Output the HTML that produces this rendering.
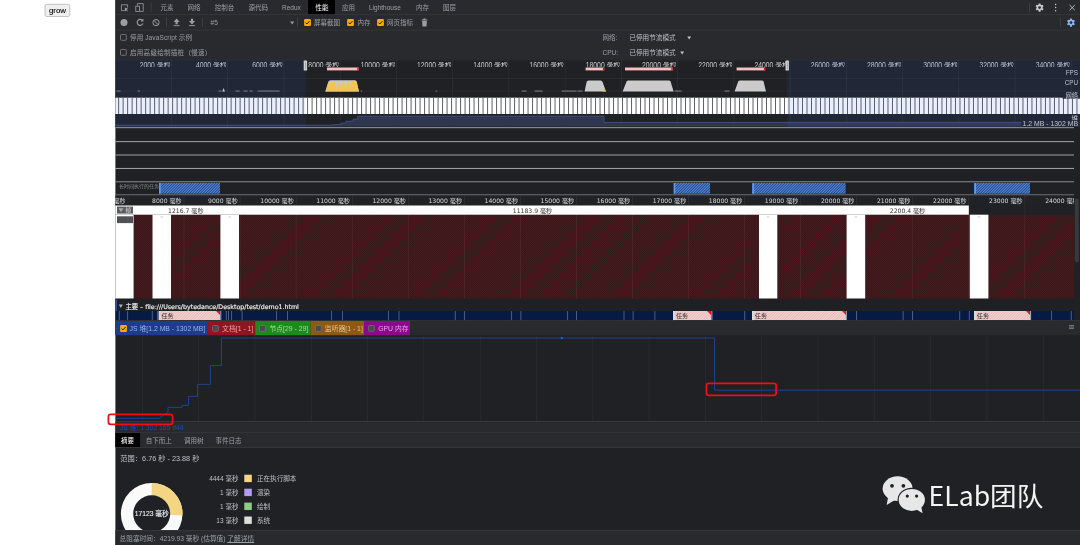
<!DOCTYPE html>
<html lang="zh"><head><meta charset="utf-8"><title>Performance</title>
<style>
html,body{margin:0;padding:0}
body{width:1080px;height:545px;position:relative;overflow:hidden;background:#fff;font-family:'Liberation Sans','Noto Sans CJK SC',sans-serif}
#r div,#r svg{position:absolute}
#r{position:absolute;left:0;top:0;width:1080px;height:545px;overflow:hidden;will-change:transform}
.t{white-space:nowrap}
</style></head><body><div id="r">
<svg style="left:0;top:0;width:0;height:0" width="0" height="0"><defs>
<pattern id="hb" width="1.9" height="1.9" patternUnits="userSpaceOnUse" patternTransform="rotate(-45)"><rect width="1.9" height="1.9" fill="#4f86e4"/><rect width="1.9" height="0.95" fill="#2c4a84"/></pattern>
<pattern id="hp" width="1.9" height="1.9" patternUnits="userSpaceOnUse" patternTransform="rotate(-45)"><rect width="1.9" height="1.9" fill="#f4d2d2"/><rect width="1.9" height="0.8" fill="#e6b6b6"/></pattern>
<pattern id="hr" width="1.5" height="1.5" patternUnits="userSpaceOnUse" patternTransform="rotate(-45)"><rect width="1.5" height="1.5" fill="#2f1a1d"/><rect width="1.5" height="0.5" fill="#62151a"/></pattern>
</defs></svg>

<svg style="left:40px;top:0;width:36px;height:22px" viewBox="40 0 36 22"><rect x="45" y="4.3" width="24.8" height="12.2" rx="1.8" fill="#efefef" stroke="#a8a8a8" stroke-width="0.65"/></svg>
<div class="t " style="top:6.38px;font-size:7.9px;line-height:9px;color:#000;left:-92.50px;width:300px;text-align:center;-webkit-text-stroke:0.1px #000;">grow</div>
<svg style="left:115px;top:0px;width:965px;height:545px" viewBox="115 0 965 545"><rect x="115.40" y="0.00" width="964.60" height="545.00" fill="#202124"/><rect x="115.40" y="0.00" width="964.60" height="59.60" fill="#292a2d"/><rect x="115.40" y="14.20" width="964.60" height="0.70" fill="#3a3b3f"/><rect x="115.40" y="29.75" width="964.60" height="0.70" fill="#3a3b3f"/><rect x="308.00" y="0.00" width="27.00" height="14.10" fill="#000"/></svg>
<div class="t " style="top:3.87px;font-size:6.5px;line-height:7px;color:#9aa0a6;left:160.60px;">元素</div>
<div class="t " style="top:3.87px;font-size:6.5px;line-height:7px;color:#9aa0a6;left:187.60px;">网络</div>
<div class="t " style="top:3.87px;font-size:6.5px;line-height:7px;color:#9aa0a6;left:214.80px;">控制台</div>
<div class="t " style="top:3.87px;font-size:6.5px;line-height:7px;color:#9aa0a6;left:248.60px;">源代码</div>
<div class="t " style="top:3.87px;font-size:6.5px;line-height:7px;color:#9aa0a6;left:282.00px;">Redux</div>
<div class="t " style="top:3.87px;font-size:6.5px;line-height:7px;color:#fff;left:315.40px;">性能</div>
<div class="t " style="top:3.87px;font-size:6.5px;line-height:7px;color:#9aa0a6;left:342.00px;">应用</div>
<div class="t " style="top:3.87px;font-size:6.5px;line-height:7px;color:#9aa0a6;left:369.00px;">Lighthouse</div>
<div class="t " style="top:3.87px;font-size:6.5px;line-height:7px;color:#9aa0a6;left:416.00px;">内存</div>
<div class="t " style="top:3.87px;font-size:6.5px;line-height:7px;color:#9aa0a6;left:443.00px;">图层</div>
<svg style="left:120px;top:3px;width:26px;height:10px" viewBox="0 0 26 10"><path d="M6.2 7.6H1.4V1.8H7.6V4.6" fill="none" stroke="#9aa0a6" stroke-width="0.8"/><path d="M4.6 4.4L8.2 5.8L6.8 6.4L7.9 8.1L7.2 8.5L6.2 6.9L5.2 7.8Z" fill="#9aa0a6"/><path d="M17.4 2.6V0.6H23.2V8.4H19.6" fill="none" stroke="#9aa0a6" stroke-width="0.8"/><rect x="15.8" y="3.2" width="3.6" height="5.2" fill="none" stroke="#9aa0a6" stroke-width="0.8"/></svg>
<svg style="left:150px;top:3px;width:880px;height:9px" viewBox="150 3 880 9"><rect x="150.80" y="3.00" width="0.60" height="9.00" fill="#4a4c50"/><rect x="1029.20" y="3.00" width="0.60" height="9.00" fill="#4a4c50"/></svg>
<svg style="left:1030px;top:0;width:50px;height:30px" viewBox="0 0 50 30"><g transform="translate(9.6,7.6)"><g fill="#c8c9cb"><rect x="-1" y="-4.1" width="2" height="8.2" rx="0.3" transform="rotate(0)"/><rect x="-1" y="-4.1" width="2" height="8.2" rx="0.3" transform="rotate(60)"/><rect x="-1" y="-4.1" width="2" height="8.2" rx="0.3" transform="rotate(120)"/><circle r="3"/></g><circle r="1.35" fill="#292a2d"/></g><g fill="#c8c9cb"><circle cx="25.6" cy="4.5" r="0.75"/><circle cx="25.6" cy="7.6" r="0.75"/><circle cx="25.6" cy="10.7" r="0.75"/></g><path d="M39.6 5L44.8 10.2M44.8 5L39.6 10.2" stroke="#c8c9cb" stroke-width="0.9" fill="none"/><g transform="translate(41,22.6)"><g fill="#8ab4f8"><rect x="-1" y="-4.1" width="2" height="8.2" rx="0.3" transform="rotate(0)"/><rect x="-1" y="-4.1" width="2" height="8.2" rx="0.3" transform="rotate(60)"/><rect x="-1" y="-4.1" width="2" height="8.2" rx="0.3" transform="rotate(120)"/><circle r="3"/></g><circle r="1.35" fill="#292a2d"/></g></svg>
<svg style="left:1060px;top:17px;width:1px;height:10px" viewBox="1060 17 1 10"><rect x="1060.40" y="17.50" width="0.60" height="9.50" fill="#4a4c50"/></svg>
<svg style="left:118px;top:16px;width:80px;height:13px" viewBox="0 0 80 13"><circle cx="6" cy="6.6" r="3.5" fill="#9c9ea1"/><path d="M24.6 4.6A3 3 0 1 0 25 7.4" fill="none" stroke="#9c9ea1" stroke-width="1.1"/><path d="M25.4 2.6V5.4H22.6Z" fill="#9c9ea1"/><circle cx="38" cy="6.6" r="3.1" fill="none" stroke="#9c9ea1" stroke-width="1"/><path d="M35.8 4.4L40.2 8.8" stroke="#9c9ea1" stroke-width="1"/><path d="M58.6 2.6L61.6 6H59.7V8.2H57.5V6H55.6Z" fill="#9c9ea1"/><rect x="55.6" y="9.2" width="6" height="0.9" fill="#9c9ea1"/><path d="M74 8.4L77 5H75.1V2.8H72.9V5H71Z" fill="#9c9ea1"/><rect x="71" y="9.2" width="6" height="0.9" fill="#9c9ea1"/></svg>
<svg style="left:166px;top:17px;width:132px;height:10px" viewBox="166 17 132 10"><rect x="166.40" y="17.50" width="0.60" height="9.50" fill="#4a4c50"/><rect x="202.40" y="17.50" width="0.60" height="9.50" fill="#4a4c50"/><rect x="297.40" y="17.50" width="0.60" height="9.50" fill="#4a4c50"/></svg>
<div class="t " style="top:18.97px;font-size:6.5px;line-height:7px;color:#9aa0a6;left:210.60px;">#5</div>
<svg style="left:289.6px;top:20.8px;width:4.4px;height:4px" viewBox="0 0 4.4 4"><path d="M0.2 0.4H4.2L2.2 3.6Z" fill="#9aa0a6"/></svg>
<svg style="left:303.6px;top:19.1px;width:7px;height:7px" viewBox="0 0 7 7"><rect x="0.1" y="0.1" width="6.8" height="6.8" rx="1" fill="#f9ab00"/><path d="M1.5 3.6L2.9 5L5.6 2" fill="none" stroke="#202124" stroke-width="1"/></svg>
<div class="t " style="top:18.97px;font-size:6.5px;line-height:7px;color:#9aa0a6;left:314.00px;">屏幕截图</div>
<svg style="left:347px;top:19.1px;width:7px;height:7px" viewBox="0 0 7 7"><rect x="0.1" y="0.1" width="6.8" height="6.8" rx="1" fill="#f9ab00"/><path d="M1.5 3.6L2.9 5L5.6 2" fill="none" stroke="#202124" stroke-width="1"/></svg>
<div class="t " style="top:18.97px;font-size:6.5px;line-height:7px;color:#9aa0a6;left:357.60px;">内存</div>
<svg style="left:377px;top:19.1px;width:7px;height:7px" viewBox="0 0 7 7"><rect x="0.1" y="0.1" width="6.8" height="6.8" rx="1" fill="#f9ab00"/><path d="M1.5 3.6L2.9 5L5.6 2" fill="none" stroke="#202124" stroke-width="1"/></svg>
<div class="t " style="top:18.97px;font-size:6.5px;line-height:7px;color:#9aa0a6;left:387.00px;">网页指标</div>
<svg style="left:421px;top:18px;width:7px;height:9px" viewBox="0 0 7 9"><path d="M0.6 1.6H6.4V2.5H0.6ZM2.4 0.6H4.6V1.6H2.4ZM1.1 3H5.9L5.5 8.4H1.5Z" fill="#9c9ea1"/></svg>
<svg style="left:120px;top:34.2px;width:7px;height:7px" viewBox="0 0 7 7"><rect x="0.5" y="0.5" width="5.8" height="5.8" rx="0.9" fill="none" stroke="#8a8d91" stroke-width="0.7"/></svg>
<div class="t " style="top:33.97px;font-size:6.5px;line-height:7px;color:#9aa0a6;left:130.00px;letter-spacing:0.13px;">停用 JavaScript 示例</div>
<svg style="left:120px;top:49.4px;width:7px;height:7px" viewBox="0 0 7 7"><rect x="0.5" y="0.5" width="5.8" height="5.8" rx="0.9" fill="none" stroke="#8a8d91" stroke-width="0.7"/></svg>
<div class="t " style="top:48.97px;font-size:6.5px;line-height:7px;color:#9aa0a6;left:130.00px;letter-spacing:0.3px;">启用高级绘制插桩（慢速）</div>
<div class="t " style="top:33.97px;font-size:6.5px;line-height:7px;color:#9aa0a6;left:602.60px;">网络:</div>
<div class="t " style="top:34.02px;font-size:6.62px;line-height:7px;color:#bdc1c6;left:629.40px;">已停用节流模式</div>
<div class="t " style="top:48.87px;font-size:6.5px;line-height:7px;color:#9aa0a6;left:602.60px;">CPU:</div>
<div class="t " style="top:48.92px;font-size:6.62px;line-height:7px;color:#bdc1c6;left:629.40px;">已停用节流模式</div>
<svg style="left:686.8px;top:35.8px;width:4.4px;height:4px" viewBox="0 0 4.4 4"><path d="M0.2 0.4H4.2L2.2 3.6Z" fill="#bdc1c6"/></svg>
<svg style="left:679.8px;top:50.7px;width:4.4px;height:4px" viewBox="0 0 4.4 4"><path d="M0.2 0.4H4.2L2.2 3.6Z" fill="#bdc1c6"/></svg>
<svg style="left:115px;top:59px;width:965px;height:69px" viewBox="115 59 965 69"><rect x="115.40" y="59.60" width="964.60" height="67.60" fill="#202124"/><rect x="115.40" y="59.60" width="964.60" height="0.60" fill="#33353a"/><rect x="171.14" y="59.60" width="0.60" height="67.60" fill="rgba(255,255,255,0.08)"/><rect x="227.38" y="59.60" width="0.60" height="67.60" fill="rgba(255,255,255,0.08)"/><rect x="283.62" y="59.60" width="0.60" height="67.60" fill="rgba(255,255,255,0.08)"/><rect x="339.86" y="59.60" width="0.60" height="67.60" fill="rgba(255,255,255,0.08)"/><rect x="396.10" y="59.60" width="0.60" height="67.60" fill="rgba(255,255,255,0.08)"/><rect x="452.34" y="59.60" width="0.60" height="67.60" fill="rgba(255,255,255,0.08)"/><rect x="508.58" y="59.60" width="0.60" height="67.60" fill="rgba(255,255,255,0.08)"/><rect x="564.82" y="59.60" width="0.60" height="67.60" fill="rgba(255,255,255,0.08)"/><rect x="621.06" y="59.60" width="0.60" height="67.60" fill="rgba(255,255,255,0.08)"/><rect x="677.30" y="59.60" width="0.60" height="67.60" fill="rgba(255,255,255,0.08)"/><rect x="733.54" y="59.60" width="0.60" height="67.60" fill="rgba(255,255,255,0.08)"/><rect x="789.78" y="59.60" width="0.60" height="67.60" fill="rgba(255,255,255,0.08)"/><rect x="846.02" y="59.60" width="0.60" height="67.60" fill="rgba(255,255,255,0.08)"/><rect x="902.26" y="59.60" width="0.60" height="67.60" fill="rgba(255,255,255,0.08)"/><rect x="958.50" y="59.60" width="0.60" height="67.60" fill="rgba(255,255,255,0.08)"/><rect x="1014.74" y="59.60" width="0.60" height="67.60" fill="rgba(255,255,255,0.08)"/><rect x="1070.98" y="59.60" width="0.60" height="67.60" fill="rgba(255,255,255,0.08)"/><rect x="115.40" y="78.10" width="964.60" height="0.60" fill="rgba(255,255,255,0.08)"/><rect x="115.40" y="90.80" width="964.60" height="0.50" fill="rgba(255,255,255,0.08)"/></svg>
<div style="left:0;top:62.3px;width:1080px;height:4.6px;overflow:hidden">
<div class="t" style="right:909.76px;top:-1.2px;font-size:6.8px;line-height:8px;color:#c6c8cc;transform:scaleY(1.32);transform-origin:0 1.4px">2000 毫秒</div>
<div class="t" style="right:853.52px;top:-1.2px;font-size:6.8px;line-height:8px;color:#c6c8cc;transform:scaleY(1.32);transform-origin:0 1.4px">4000 毫秒</div>
<div class="t" style="right:797.28px;top:-1.2px;font-size:6.8px;line-height:8px;color:#c6c8cc;transform:scaleY(1.32);transform-origin:0 1.4px">6000 毫秒</div>
<div class="t" style="right:741.04px;top:-1.2px;font-size:6.8px;line-height:8px;color:#c6c8cc;transform:scaleY(1.32);transform-origin:0 1.4px">8000 毫秒</div>
<div class="t" style="right:684.80px;top:-1.2px;font-size:6.8px;line-height:8px;color:#c6c8cc;transform:scaleY(1.32);transform-origin:0 1.4px">10000 毫秒</div>
<div class="t" style="right:628.56px;top:-1.2px;font-size:6.8px;line-height:8px;color:#c6c8cc;transform:scaleY(1.32);transform-origin:0 1.4px">12000 毫秒</div>
<div class="t" style="right:572.32px;top:-1.2px;font-size:6.8px;line-height:8px;color:#c6c8cc;transform:scaleY(1.32);transform-origin:0 1.4px">14000 毫秒</div>
<div class="t" style="right:516.08px;top:-1.2px;font-size:6.8px;line-height:8px;color:#c6c8cc;transform:scaleY(1.32);transform-origin:0 1.4px">16000 毫秒</div>
<div class="t" style="right:459.84px;top:-1.2px;font-size:6.8px;line-height:8px;color:#c6c8cc;transform:scaleY(1.32);transform-origin:0 1.4px">18000 毫秒</div>
<div class="t" style="right:403.60px;top:-1.2px;font-size:6.8px;line-height:8px;color:#c6c8cc;transform:scaleY(1.32);transform-origin:0 1.4px">20000 毫秒</div>
<div class="t" style="right:347.36px;top:-1.2px;font-size:6.8px;line-height:8px;color:#c6c8cc;transform:scaleY(1.32);transform-origin:0 1.4px">22000 毫秒</div>
<div class="t" style="right:291.12px;top:-1.2px;font-size:6.8px;line-height:8px;color:#c6c8cc;transform:scaleY(1.32);transform-origin:0 1.4px">24000 毫秒</div>
<div class="t" style="right:234.88px;top:-1.2px;font-size:6.8px;line-height:8px;color:#c6c8cc;transform:scaleY(1.32);transform-origin:0 1.4px">26000 毫秒</div>
<div class="t" style="right:178.64px;top:-1.2px;font-size:6.8px;line-height:8px;color:#c6c8cc;transform:scaleY(1.32);transform-origin:0 1.4px">28000 毫秒</div>
<div class="t" style="right:122.40px;top:-1.2px;font-size:6.8px;line-height:8px;color:#c6c8cc;transform:scaleY(1.32);transform-origin:0 1.4px">30000 毫秒</div>
<div class="t" style="right:66.16px;top:-1.2px;font-size:6.8px;line-height:8px;color:#c6c8cc;transform:scaleY(1.32);transform-origin:0 1.4px">32000 毫秒</div>
<div class="t" style="right:9.92px;top:-1.2px;font-size:6.8px;line-height:8px;color:#c6c8cc;transform:scaleY(1.32);transform-origin:0 1.4px">34000 毫秒</div>
</div>
<svg style="left:115.4px;top:110px;width:964.6px;height:18px" viewBox="0 0 964.6 18"><polygon points="0.0,15.2 214.6,15.2 226.6,14.2 226.6,13.0 231.1,13.0 231.1,11.2 238.1,11.2 238.1,9.2 242.8,9.2 242.8,6.2 489.0,6.2 489.0,12.4 964.6,12.4 964.6,16.6 0,16.6" fill="#2f3750"/><polyline points="0.0,15.2 214.6,15.2 226.6,14.2 226.6,13.0 231.1,13.0 231.1,11.2 238.1,11.2 238.1,9.2 242.8,9.2 242.8,6.2 489.0,6.2 489.0,12.4 964.6,12.4" fill="none" stroke="#445789" stroke-width="0.8"/></svg>
<svg style="left:115px;top:97px;width:965px;height:17px" viewBox="115 97 965 17"><rect x="115.40" y="97.70" width="964.60" height="16.30" fill="#fff"/></svg>
<svg style="left:115.4px;top:97.7px;width:964.6px;height:16.3px" viewBox="0 0 964.6 16.3"><path d="M3.55 0v16.3M8.05 0v16.3M12.55 0v16.3M17.05 0v16.3M21.55 0v16.3M26.05 0v16.3M30.55 0v16.3M35.05 0v16.3M39.55 0v16.3M44.05 0v16.3M48.55 0v16.3M53.05 0v16.3M57.55 0v16.3M62.05 0v16.3M66.55 0v16.3M71.05 0v16.3M75.55 0v16.3M80.05 0v16.3M84.55 0v16.3M89.05 0v16.3M93.55 0v16.3M98.05 0v16.3M102.55 0v16.3M107.05 0v16.3M111.55 0v16.3M116.05 0v16.3M120.55 0v16.3M125.05 0v16.3M129.55 0v16.3M134.05 0v16.3M138.55 0v16.3M143.05 0v16.3M147.55 0v16.3M152.05 0v16.3M156.55 0v16.3M161.05 0v16.3M165.55 0v16.3M170.05 0v16.3M174.55 0v16.3M179.05 0v16.3M183.55 0v16.3M188.05 0v16.3M192.55 0v16.3M197.05 0v16.3M201.55 0v16.3M206.05 0v16.3M210.55 0v16.3M215.05 0v16.3M219.55 0v16.3M224.05 0v16.3M228.55 0v16.3M233.05 0v16.3M237.55 0v16.3M242.05 0v16.3M246.55 0v16.3M251.05 0v16.3M255.55 0v16.3M260.05 0v16.3M264.55 0v16.3M269.05 0v16.3M273.55 0v16.3M278.05 0v16.3M282.55 0v16.3M287.05 0v16.3M291.55 0v16.3M296.05 0v16.3M300.55 0v16.3M305.05 0v16.3M309.55 0v16.3M314.05 0v16.3M318.55 0v16.3M323.05 0v16.3M327.55 0v16.3M332.05 0v16.3M336.55 0v16.3M341.05 0v16.3M345.55 0v16.3M350.05 0v16.3M354.55 0v16.3M359.05 0v16.3M363.55 0v16.3M368.05 0v16.3M372.55 0v16.3M377.05 0v16.3M381.55 0v16.3M386.05 0v16.3M390.55 0v16.3M395.05 0v16.3M399.55 0v16.3M404.05 0v16.3M408.55 0v16.3M413.05 0v16.3M417.55 0v16.3M422.05 0v16.3M426.55 0v16.3M431.05 0v16.3M435.55 0v16.3M440.05 0v16.3M444.55 0v16.3M449.05 0v16.3M453.55 0v16.3M458.05 0v16.3M462.55 0v16.3M467.05 0v16.3M471.55 0v16.3M476.05 0v16.3M480.55 0v16.3M485.05 0v16.3M489.55 0v16.3M494.05 0v16.3M498.55 0v16.3M503.05 0v16.3M507.55 0v16.3M512.05 0v16.3M516.55 0v16.3M521.05 0v16.3M525.55 0v16.3M530.05 0v16.3M534.55 0v16.3M539.05 0v16.3M543.55 0v16.3M548.05 0v16.3M552.55 0v16.3M557.05 0v16.3M561.55 0v16.3M566.05 0v16.3M570.55 0v16.3M575.05 0v16.3M579.55 0v16.3M584.05 0v16.3M588.55 0v16.3M593.05 0v16.3M597.55 0v16.3M602.05 0v16.3M606.55 0v16.3M611.05 0v16.3M615.55 0v16.3M620.05 0v16.3M624.55 0v16.3M629.05 0v16.3M633.55 0v16.3M638.05 0v16.3M642.55 0v16.3M647.05 0v16.3M651.55 0v16.3M656.05 0v16.3M660.55 0v16.3M665.05 0v16.3M669.55 0v16.3M674.05 0v16.3M678.55 0v16.3M683.05 0v16.3M687.55 0v16.3M692.05 0v16.3M696.55 0v16.3M701.05 0v16.3M705.55 0v16.3M710.05 0v16.3M714.55 0v16.3M719.05 0v16.3M723.55 0v16.3M728.05 0v16.3M732.55 0v16.3M737.05 0v16.3M741.55 0v16.3M746.05 0v16.3M750.55 0v16.3M755.05 0v16.3M759.55 0v16.3M764.05 0v16.3M768.55 0v16.3M773.05 0v16.3M777.55 0v16.3M782.05 0v16.3M786.55 0v16.3M791.05 0v16.3M795.55 0v16.3M800.05 0v16.3M804.55 0v16.3M809.05 0v16.3M813.55 0v16.3M818.05 0v16.3M822.55 0v16.3M827.05 0v16.3M831.55 0v16.3M836.05 0v16.3M840.55 0v16.3M845.05 0v16.3M849.55 0v16.3M854.05 0v16.3M858.55 0v16.3M863.05 0v16.3M867.55 0v16.3M872.05 0v16.3M876.55 0v16.3M881.05 0v16.3M885.55 0v16.3M890.05 0v16.3M894.55 0v16.3M899.05 0v16.3M903.55 0v16.3M908.05 0v16.3M912.55 0v16.3M917.05 0v16.3M921.55 0v16.3M926.05 0v16.3M930.55 0v16.3M935.05 0v16.3M939.55 0v16.3M944.05 0v16.3M948.55 0v16.3M953.05 0v16.3M957.55 0v16.3M962.05 0v16.3" stroke="#55565a" stroke-width="0.95" fill="none"/></svg>
<svg style="left:115.4px;top:59.6px;width:964.6px;height:34px" viewBox="0 0 964.6 34"><rect x="212.0" y="7.5" width="31.6" height="2.9" fill="#f6bfc0"/><rect x="242.3" y="7.5" width="1.3" height="2.9" fill="#e8121c"/><rect x="470.6" y="7.5" width="18.6" height="2.9" fill="#f6bfc0"/><rect x="487.9" y="7.5" width="1.3" height="2.9" fill="#e8121c"/><rect x="510.0" y="7.5" width="47.6" height="2.9" fill="#f6bfc0"/><rect x="556.3" y="7.5" width="1.3" height="2.9" fill="#e8121c"/><rect x="621.6" y="7.5" width="28.6" height="2.9" fill="#f6bfc0"/><rect x="648.9" y="7.5" width="1.3" height="2.9" fill="#e8121c"/><path d="M210.4 31.4L213.2 22.0Q213.8 20.3 215.6 20.3L239.8 20.3Q241.4 20.3 241.8 21.8L243.9 31.4Z" fill="#c9c9c9"/><path d="M210.4 31.4L213.0 23.8Q214.2 21.7 216.6 21.7L219.0 21.9Q220.8 22.4 221.3 28.0L221.9 28.0Q222.4 22.4 223.8 22.4Q225.2 22.6 225.8 28.0L226.4 28.0Q227.0 21.4 228.2 21.4Q229.6 21.6 230.3 28.7L230.9 28.7Q231.5 20.9 232.9 20.9Q234.2 21.1 234.6 26.4L235.2 26.4Q235.6 20.7 237.2 20.7L239.6 20.7Q241.4 20.8 241.8 22.4L243.9 31.4Z" fill="#f1c453"/><path d="M469.6 31.4L471.6 22Q472.0 20.4 473.6 20.4H485.6Q487.0 20.4 487.6 22L491.0 31.4Z" fill="#cbcbcb"/><path d="M487.6 31.4L489.2 28.4L491.0 31.4Z" fill="#f1c453"/><path d="M507.6 31.4L511.6 21.6Q512.2 20.4 513.6 20.4H553.6Q555.2 20.4 555.6 21.6L558.6 31.4Z" fill="#cbcbcb"/><path d="M619.6 31.4L623.2 21.6Q623.6 20.4 625.2 20.4H646.6Q648.2 20.4 648.6 21.6L651.0 31.4Z" fill="#cbcbcb"/><rect x="1.6" y="30.6" width="4.0" height="0.9" fill="#8d8e90"/><rect x="22.6" y="30.6" width="2.4" height="0.9" fill="#8d8e90"/><rect x="103.6" y="30.6" width="3.0" height="0.9" fill="#8d8e90"/><rect x="120.6" y="30.6" width="4.0" height="0.9" fill="#8d8e90"/><rect x="128.6" y="30.6" width="4.0" height="0.9" fill="#8d8e90"/><rect x="134.6" y="30.6" width="3.0" height="0.9" fill="#8d8e90"/><rect x="142.6" y="30.6" width="22.0" height="0.9" fill="#8d8e90"/><rect x="245.6" y="30.6" width="1.5" height="0.9" fill="#8d8e90"/><rect x="320.6" y="30.6" width="1.5" height="0.9" fill="#8d8e90"/><rect x="406.6" y="30.6" width="5.0" height="0.9" fill="#8d8e90"/><rect x="419.6" y="30.6" width="8.0" height="0.9" fill="#8d8e90"/><rect x="446.6" y="30.6" width="15.0" height="0.9" fill="#8d8e90"/><rect x="462.6" y="30.6" width="5.0" height="0.9" fill="#8d8e90"/><rect x="559.6" y="30.6" width="7.0" height="0.9" fill="#8d8e90"/><rect x="609.6" y="30.6" width="5.0" height="0.9" fill="#8d8e90"/><path d="M107.2 31.4L108.6 28L110.0 31.4Z" fill="#cfcfcf"/></svg>
<svg style="left:115px;top:59px;width:965px;height:69px" viewBox="115 59 965 69"><rect x="115.40" y="59.60" width="190.20" height="67.60" fill="rgba(60,100,230,0.10)"/><rect x="787.20" y="59.60" width="292.80" height="67.60" fill="rgba(60,100,230,0.10)"/><rect x="303.70" y="60.60" width="3.40" height="10.00" rx="0.6" fill="#d0d0d0"/><rect x="305.10" y="62.20" width="0.60" height="6.80" fill="#8c8c8c"/><rect x="785.50" y="60.60" width="3.40" height="10.00" rx="0.6" fill="#d0d0d0"/><rect x="786.90" y="62.20" width="0.60" height="6.80" fill="#8c8c8c"/></svg>
<div class="t " style="top:68.80px;font-size:6.3px;line-height:7px;color:#bdc1c6;right:2.00px;">FPS</div>
<div class="t " style="top:78.80px;font-size:6.3px;line-height:7px;color:#bdc1c6;right:2.00px;">CPU</div>
<svg style="left:1062px;top:92px;width:18px;height:7px" viewBox="1062 92 18 7"><rect x="1062.50" y="92.40" width="17.50" height="6.40" fill="rgba(37,42,58,0.85)"/></svg>
<div class="t " style="top:91.80px;font-size:6.3px;line-height:7px;color:#bdc1c6;right:2.00px;">网络</div>
<div class="t " style="top:115.21px;font-size:6.6px;line-height:7px;color:#d0d3d8;right:2.00px;">堆</div>
<svg style="left:1021px;top:120px;width:59px;height:7px" viewBox="1021 120 59 7"><rect x="1021.00" y="120.20" width="59.00" height="6.60" fill="rgba(37,42,58,0.85)"/></svg>
<div class="t " style="top:119.92px;font-size:6.9px;line-height:7px;color:#bdc1c6;right:2.00px;">1.2 MB - 1302 MB</div>
<svg style="left:115px;top:127px;width:959px;height:69px" viewBox="115 127 959 69"><rect x="115.40" y="127.00" width="958.60" height="1.20" fill="#858585"/><rect x="115.40" y="141.25" width="958.60" height="0.85" fill="#bcbcbc"/><rect x="115.40" y="154.40" width="958.60" height="1.20" fill="#8a8a8a"/><rect x="115.40" y="167.95" width="958.60" height="0.85" fill="#bcbcbc"/><rect x="115.40" y="181.20" width="958.60" height="1.10" fill="#828282"/><rect x="115.40" y="194.40" width="958.60" height="1.00" fill="#808080"/></svg>
<div class="t " style="top:183.02px;font-size:5px;line-height:6px;color:#8a8d91;left:119.00px;">长时间执行的任务</div>
<svg style="left:159.00px;top:183.00px;width:61.40px;height:10.70px"><rect width="100%" height="100%" fill="url(#hb)"/></svg>
<svg style="left:159px;top:183px;width:2px;height:11px" viewBox="159 183 2 11"><rect x="159.00" y="183.00" width="1.70" height="10.70" fill="#5c9cf8"/></svg>
<svg style="left:673.60px;top:183.00px;width:36.40px;height:10.70px"><rect width="100%" height="100%" fill="url(#hb)"/></svg>
<svg style="left:673px;top:183px;width:3px;height:11px" viewBox="673 183 3 11"><rect x="673.60" y="183.00" width="1.70" height="10.70" fill="#5c9cf8"/></svg>
<svg style="left:752.40px;top:183.00px;width:93.60px;height:10.70px"><rect width="100%" height="100%" fill="url(#hb)"/></svg>
<svg style="left:752px;top:183px;width:3px;height:11px" viewBox="752 183 3 11"><rect x="752.40" y="183.00" width="1.70" height="10.70" fill="#5c9cf8"/></svg>
<svg style="left:974.30px;top:183.00px;width:56.00px;height:10.70px"><rect width="100%" height="100%" fill="url(#hb)"/></svg>
<svg style="left:115px;top:183px;width:959px;height:23px" viewBox="115 183 959 23"><rect x="974.30" y="183.00" width="1.70" height="10.70" fill="#5c9cf8"/><rect x="115.40" y="195.50" width="958.60" height="10.00" fill="#212226"/></svg>
<div style="left:115.4px;top:195.5px;width:958.6px;height:10px;overflow:hidden">
<div class="t" style="right:948.36px;top:0.3px;font-size:6.1px;line-height:9px;color:#dcdcdc;font-family:'DejaVu Sans','Noto Sans CJK SC',sans-serif">7000 毫秒</div>
<div class="t" style="right:892.30px;top:0.3px;font-size:6.1px;line-height:9px;color:#dcdcdc;font-family:'DejaVu Sans','Noto Sans CJK SC',sans-serif">8000 毫秒</div>
<div class="t" style="right:836.24px;top:0.3px;font-size:6.1px;line-height:9px;color:#dcdcdc;font-family:'DejaVu Sans','Noto Sans CJK SC',sans-serif">9000 毫秒</div>
<div class="t" style="right:780.18px;top:0.3px;font-size:6.1px;line-height:9px;color:#dcdcdc;font-family:'DejaVu Sans','Noto Sans CJK SC',sans-serif">10000 毫秒</div>
<div class="t" style="right:724.12px;top:0.3px;font-size:6.1px;line-height:9px;color:#dcdcdc;font-family:'DejaVu Sans','Noto Sans CJK SC',sans-serif">11000 毫秒</div>
<div class="t" style="right:668.06px;top:0.3px;font-size:6.1px;line-height:9px;color:#dcdcdc;font-family:'DejaVu Sans','Noto Sans CJK SC',sans-serif">12000 毫秒</div>
<div class="t" style="right:612.00px;top:0.3px;font-size:6.1px;line-height:9px;color:#dcdcdc;font-family:'DejaVu Sans','Noto Sans CJK SC',sans-serif">13000 毫秒</div>
<div class="t" style="right:555.94px;top:0.3px;font-size:6.1px;line-height:9px;color:#dcdcdc;font-family:'DejaVu Sans','Noto Sans CJK SC',sans-serif">14000 毫秒</div>
<div class="t" style="right:499.88px;top:0.3px;font-size:6.1px;line-height:9px;color:#dcdcdc;font-family:'DejaVu Sans','Noto Sans CJK SC',sans-serif">15000 毫秒</div>
<div class="t" style="right:443.82px;top:0.3px;font-size:6.1px;line-height:9px;color:#dcdcdc;font-family:'DejaVu Sans','Noto Sans CJK SC',sans-serif">16000 毫秒</div>
<div class="t" style="right:387.76px;top:0.3px;font-size:6.1px;line-height:9px;color:#dcdcdc;font-family:'DejaVu Sans','Noto Sans CJK SC',sans-serif">17000 毫秒</div>
<div class="t" style="right:331.70px;top:0.3px;font-size:6.1px;line-height:9px;color:#dcdcdc;font-family:'DejaVu Sans','Noto Sans CJK SC',sans-serif">18000 毫秒</div>
<div class="t" style="right:275.64px;top:0.3px;font-size:6.1px;line-height:9px;color:#dcdcdc;font-family:'DejaVu Sans','Noto Sans CJK SC',sans-serif">19000 毫秒</div>
<div class="t" style="right:219.58px;top:0.3px;font-size:6.1px;line-height:9px;color:#dcdcdc;font-family:'DejaVu Sans','Noto Sans CJK SC',sans-serif">20000 毫秒</div>
<div class="t" style="right:163.52px;top:0.3px;font-size:6.1px;line-height:9px;color:#dcdcdc;font-family:'DejaVu Sans','Noto Sans CJK SC',sans-serif">21000 毫秒</div>
<div class="t" style="right:107.46px;top:0.3px;font-size:6.1px;line-height:9px;color:#dcdcdc;font-family:'DejaVu Sans','Noto Sans CJK SC',sans-serif">22000 毫秒</div>
<div class="t" style="right:51.40px;top:0.3px;font-size:6.1px;line-height:9px;color:#dcdcdc;font-family:'DejaVu Sans','Noto Sans CJK SC',sans-serif">23000 毫秒</div>
<div class="t" style="right:-4.66px;top:0.3px;font-size:6.1px;line-height:9px;color:#dcdcdc;font-family:'DejaVu Sans','Noto Sans CJK SC',sans-serif">24000 毫秒</div>
</div>
<svg style="left:115px;top:205px;width:854px;height:10px" viewBox="115 205 854 10"><rect x="115.40" y="205.50" width="853.40" height="9.20" fill="#fff"/><rect x="117.00" y="206.60" width="16.00" height="7.00" fill="#5a5b5e"/></svg>
<svg style="left:117px;top:206px;width:9px;height:8px" viewBox="117 206 9 8"><path d="M118.3 208.300H123.700L121 212Z" fill="#a9a9ab"/></svg>
<div class="t " style="top:207.27px;font-size:5.6px;line-height:6px;color:#e8e8e8;font-family:'DejaVu Sans','Noto Sans CJK SC',sans-serif;left:125.60px;">帧</div>
<div class="t " style="top:206.76px;font-size:6.1px;line-height:7px;color:#333;font-family:'DejaVu Sans','Noto Sans CJK SC',sans-serif;left:35.80px;width:300px;text-align:center;">1216.7 毫秒</div>
<div class="t " style="top:206.76px;font-size:6.1px;line-height:7px;color:#333;font-family:'DejaVu Sans','Noto Sans CJK SC',sans-serif;left:382.50px;width:300px;text-align:center;">11183.9 毫秒</div>
<div class="t " style="top:206.76px;font-size:6.1px;line-height:7px;color:#333;font-family:'DejaVu Sans','Noto Sans CJK SC',sans-serif;left:757.50px;width:300px;text-align:center;">2200.4 毫秒</div>
<svg style="left:133.00px;top:214.70px;width:941.00px;height:84.30px"><rect width="100%" height="100%" fill="url(#hr)"/></svg>
<svg style="left:115px;top:195px;width:967px;height:126px" viewBox="115 195 967 126"><rect x="115.40" y="214.70" width="18.20" height="84.00" fill="#fff"/><rect x="152.50" y="214.70" width="18.50" height="84.00" fill="#fff"/><rect x="160.45" y="216.60" width="2.60" height="0.70" fill="#b5b5b5"/><rect x="220.40" y="214.70" width="18.60" height="84.00" fill="#fff"/><rect x="228.40" y="216.60" width="2.60" height="0.70" fill="#b5b5b5"/><rect x="759.00" y="214.70" width="18.30" height="84.00" fill="#fff"/><rect x="766.85" y="216.60" width="2.60" height="0.70" fill="#b5b5b5"/><rect x="846.60" y="214.70" width="18.60" height="84.00" fill="#fff"/><rect x="854.60" y="216.60" width="2.60" height="0.70" fill="#b5b5b5"/><rect x="969.80" y="214.70" width="18.60" height="84.00" fill="#fff"/><rect x="977.80" y="216.60" width="2.60" height="0.70" fill="#b5b5b5"/><rect x="117.00" y="216.30" width="16.00" height="6.80" fill="#505154"/><rect x="127.64" y="195.50" width="0.60" height="125.00" fill="rgba(255,255,255,0.09)"/><rect x="183.70" y="195.50" width="0.60" height="125.00" fill="rgba(255,255,255,0.09)"/><rect x="239.76" y="195.50" width="0.60" height="125.00" fill="rgba(255,255,255,0.09)"/><rect x="295.82" y="195.50" width="0.60" height="125.00" fill="rgba(255,255,255,0.09)"/><rect x="351.88" y="195.50" width="0.60" height="125.00" fill="rgba(255,255,255,0.09)"/><rect x="407.94" y="195.50" width="0.60" height="125.00" fill="rgba(255,255,255,0.09)"/><rect x="464.00" y="195.50" width="0.60" height="125.00" fill="rgba(255,255,255,0.09)"/><rect x="520.06" y="195.50" width="0.60" height="125.00" fill="rgba(255,255,255,0.09)"/><rect x="576.12" y="195.50" width="0.60" height="125.00" fill="rgba(255,255,255,0.09)"/><rect x="632.18" y="195.50" width="0.60" height="125.00" fill="rgba(255,255,255,0.09)"/><rect x="688.24" y="195.50" width="0.60" height="125.00" fill="rgba(255,255,255,0.09)"/><rect x="744.30" y="195.50" width="0.60" height="125.00" fill="rgba(255,255,255,0.09)"/><rect x="800.36" y="195.50" width="0.60" height="125.00" fill="rgba(255,255,255,0.09)"/><rect x="856.42" y="195.50" width="0.60" height="125.00" fill="rgba(255,255,255,0.09)"/><rect x="912.48" y="195.50" width="0.60" height="125.00" fill="rgba(255,255,255,0.09)"/><rect x="968.54" y="195.50" width="0.60" height="125.00" fill="rgba(255,255,255,0.09)"/><rect x="1024.60" y="195.50" width="0.60" height="125.00" fill="rgba(255,255,255,0.09)"/><rect x="1080.66" y="195.50" width="0.60" height="125.00" fill="rgba(255,255,255,0.09)"/><rect x="115.40" y="298.70" width="958.60" height="12.40" fill="#1f2023"/><rect x="115.40" y="299.80" width="1.50" height="11.20" fill="#2c54b0"/></svg>
<svg style="left:118px;top:303px;width:6px;height:6px" viewBox="118 303 6 6"><path d="M118.800 304.500H122.800L120.800 308Z" fill="#b4b4b6"/></svg>
<div class="t " style="top:302.63px;font-size:6.3px;line-height:7px;color:#ececec;font-family:'DejaVu Sans','Noto Sans CJK SC',sans-serif;left:125.40px;-webkit-text-stroke:0.18px #ececec;">主要 – file:///Users/bytedance/Desktop/test/demo1.html</div>
<svg style="left:115px;top:311px;width:959px;height:10px" viewBox="115 311 959 10"><rect x="115.40" y="311.00" width="958.60" height="9.30" fill="#061a44"/><rect x="118.85" y="311.00" width="0.70" height="9.30" fill="rgba(190,200,225,0.55)"/><rect x="127.35" y="311.00" width="0.70" height="9.30" fill="rgba(190,200,225,0.55)"/><rect x="151.85" y="311.00" width="0.70" height="9.30" fill="rgba(190,200,225,0.55)"/><rect x="157.05" y="311.00" width="0.70" height="9.30" fill="rgba(190,200,225,0.55)"/><rect x="225.85" y="311.00" width="0.70" height="9.30" fill="rgba(190,200,225,0.55)"/><rect x="228.35" y="311.00" width="0.70" height="9.30" fill="rgba(190,200,225,0.55)"/><rect x="231.35" y="311.00" width="0.70" height="9.30" fill="rgba(190,200,225,0.55)"/><rect x="241.75" y="311.00" width="0.70" height="9.30" fill="rgba(190,200,225,0.55)"/><rect x="276.35" y="311.00" width="0.70" height="9.30" fill="rgba(190,200,225,0.55)"/><rect x="287.05" y="311.00" width="0.70" height="9.30" fill="rgba(190,200,225,0.55)"/><rect x="331.35" y="311.00" width="0.70" height="9.30" fill="rgba(190,200,225,0.55)"/><rect x="342.05" y="311.00" width="0.70" height="9.30" fill="rgba(190,200,225,0.55)"/><rect x="387.95" y="311.00" width="0.70" height="9.30" fill="rgba(190,200,225,0.55)"/><rect x="398.65" y="311.00" width="0.70" height="9.30" fill="rgba(190,200,225,0.55)"/><rect x="454.85" y="311.00" width="0.70" height="9.30" fill="rgba(190,200,225,0.55)"/><rect x="463.95" y="311.00" width="0.70" height="9.30" fill="rgba(190,200,225,0.55)"/><rect x="511.35" y="311.00" width="0.70" height="9.30" fill="rgba(190,200,225,0.55)"/><rect x="520.55" y="311.00" width="0.70" height="9.30" fill="rgba(190,200,225,0.55)"/><rect x="567.35" y="311.00" width="0.70" height="9.30" fill="rgba(190,200,225,0.55)"/><rect x="576.25" y="311.00" width="0.70" height="9.30" fill="rgba(190,200,225,0.55)"/><rect x="623.65" y="311.00" width="0.70" height="9.30" fill="rgba(190,200,225,0.55)"/><rect x="632.75" y="311.00" width="0.70" height="9.30" fill="rgba(190,200,225,0.55)"/><rect x="654.55" y="311.00" width="0.70" height="9.30" fill="rgba(190,200,225,0.55)"/><rect x="744.45" y="311.00" width="0.70" height="9.30" fill="rgba(190,200,225,0.55)"/><rect x="856.15" y="311.00" width="0.70" height="9.30" fill="rgba(190,200,225,0.55)"/><rect x="902.75" y="311.00" width="0.70" height="9.30" fill="rgba(190,200,225,0.55)"/><rect x="912.15" y="311.00" width="0.70" height="9.30" fill="rgba(190,200,225,0.55)"/><rect x="959.45" y="311.00" width="0.70" height="9.30" fill="rgba(190,200,225,0.55)"/><rect x="968.85" y="311.00" width="0.70" height="9.30" fill="rgba(190,200,225,0.55)"/><rect x="1051.35" y="311.00" width="0.70" height="9.30" fill="rgba(190,200,225,0.55)"/><rect x="1070.85" y="311.00" width="0.70" height="9.30" fill="rgba(190,200,225,0.55)"/></svg>
<svg style="left:158.60px;top:311.00px;width:61.80px;height:9.30px"><rect width="100%" height="100%" fill="url(#hp)"/></svg>
<svg style="left:158px;top:311px;width:64px;height:10px" viewBox="158 311 64 10"><rect x="158.60" y="311.00" width="1.60" height="9.30" fill="#dcdcdc"/><rect x="220.20" y="311.00" width="1.10" height="9.30" fill="#9aa3b8"/></svg>
<svg style="left:216.0px;top:311px;width:4.4px;height:4.4px" viewBox="0 0 4.4 4.4"><path d="M0 0H4.4V4.4Z" fill="#f01018"/></svg>
<div class="t " style="top:311.76px;font-size:6.1px;line-height:7px;color:#303030;font-family:'DejaVu Sans','Noto Sans CJK SC',sans-serif;left:161.40px;">任务</div>
<svg style="left:673.20px;top:311.00px;width:38.30px;height:9.30px"><rect width="100%" height="100%" fill="url(#hp)"/></svg>
<svg style="left:673px;top:311px;width:40px;height:10px" viewBox="673 311 40 10"><rect x="673.20" y="311.00" width="1.60" height="9.30" fill="#dcdcdc"/><rect x="711.30" y="311.00" width="1.10" height="9.30" fill="#9aa3b8"/></svg>
<svg style="left:707.1px;top:311px;width:4.4px;height:4.4px" viewBox="0 0 4.4 4.4"><path d="M0 0H4.4V4.4Z" fill="#f01018"/></svg>
<div class="t " style="top:311.76px;font-size:6.1px;line-height:7px;color:#303030;font-family:'DejaVu Sans','Noto Sans CJK SC',sans-serif;left:676.00px;">任务</div>
<svg style="left:752.00px;top:311.00px;width:94.00px;height:9.30px"><rect width="100%" height="100%" fill="url(#hp)"/></svg>
<svg style="left:752px;top:311px;width:95px;height:10px" viewBox="752 311 95 10"><rect x="752.00" y="311.00" width="1.60" height="9.30" fill="#dcdcdc"/><rect x="845.80" y="311.00" width="1.10" height="9.30" fill="#9aa3b8"/></svg>
<svg style="left:841.6px;top:311px;width:4.4px;height:4.4px" viewBox="0 0 4.4 4.4"><path d="M0 0H4.4V4.4Z" fill="#f01018"/></svg>
<div class="t " style="top:311.76px;font-size:6.1px;line-height:7px;color:#303030;font-family:'DejaVu Sans','Noto Sans CJK SC',sans-serif;left:754.80px;">任务</div>
<svg style="left:974.00px;top:311.00px;width:56.20px;height:9.30px"><rect width="100%" height="100%" fill="url(#hp)"/></svg>
<svg style="left:974px;top:311px;width:58px;height:10px" viewBox="974 311 58 10"><rect x="974.00" y="311.00" width="1.60" height="9.30" fill="#dcdcdc"/><rect x="1030.00" y="311.00" width="1.10" height="9.30" fill="#9aa3b8"/></svg>
<svg style="left:1025.8px;top:311px;width:4.4px;height:4.4px" viewBox="0 0 4.4 4.4"><path d="M0 0H4.4V4.4Z" fill="#f01018"/></svg>
<div class="t " style="top:311.76px;font-size:6.1px;line-height:7px;color:#303030;font-family:'DejaVu Sans','Noto Sans CJK SC',sans-serif;left:976.80px;">任务</div>
<svg style="left:115px;top:195px;width:965px;height:141px" viewBox="115 195 965 141"><rect x="1074.00" y="195.50" width="6.00" height="126.00" fill="#202124"/><rect x="1074.80" y="198.20" width="4.00" height="64.20" rx="2" fill="#38393c"/><rect x="115.40" y="320.40" width="964.60" height="14.80" fill="#292a2d"/><rect x="115.40" y="320.40" width="964.60" height="0.60" fill="#3a3b3f"/></svg>
<svg style="left:1069.2px;top:325.2px;width:5.2px;height:4.2px" viewBox="0 0 5 4"><path d="M0 0.3H5M0 1.9H5M0 3.5H5" stroke="#9aa0a6" stroke-width="0.7"/></svg>
<svg style="left:115px;top:321px;width:93px;height:15px" viewBox="115 321 93 15"><rect x="115.40" y="321.00" width="92.50" height="14.20" fill="#1d3c8c"/></svg>
<svg style="left:119.60000000000001px;top:324.6px;width:7px;height:7px" viewBox="0 0 7 7"><rect x="0.1" y="0.1" width="6.8" height="6.8" rx="1" fill="#f9ab00"/><path d="M1.5 3.6L2.9 5L5.6 2" fill="none" stroke="#202124" stroke-width="1"/></svg>
<div class="t " style="top:324.60px;font-size:6.85px;line-height:7px;color:#9db3e8;left:129.60px;">JS 堆[1.2 MB - 1302 MB]</div>
<svg style="left:207px;top:321px;width:49px;height:15px" viewBox="207 321 49 15"><rect x="207.90" y="321.00" width="47.30" height="14.20" fill="#8f1522"/></svg>
<svg style="left:212.1px;top:324.6px;width:7px;height:7px" viewBox="0 0 7 7"><rect x="0.5" y="0.5" width="5.8" height="5.8" rx="0.9" fill="#4a4a4c" stroke="#777" stroke-width="0.7"/></svg>
<div class="t " style="top:324.60px;font-size:6.85px;line-height:7px;color:#f0a0a8;left:222.10px;">文档[1 - 1]</div>
<svg style="left:255px;top:321px;width:56px;height:15px" viewBox="255 321 56 15"><rect x="255.20" y="321.00" width="55.40" height="14.20" fill="#1d8a1d"/></svg>
<svg style="left:259.4px;top:324.6px;width:7px;height:7px" viewBox="0 0 7 7"><rect x="0.5" y="0.5" width="5.8" height="5.8" rx="0.9" fill="#4a4a4c" stroke="#777" stroke-width="0.7"/></svg>
<div class="t " style="top:324.60px;font-size:6.85px;line-height:7px;color:#9fe09f;left:269.40px;">节点[29 - 29]</div>
<svg style="left:310px;top:321px;width:54px;height:15px" viewBox="310 321 54 15"><rect x="310.60" y="321.00" width="53.40" height="14.20" fill="#8c5a14"/></svg>
<svg style="left:314.8px;top:324.6px;width:7px;height:7px" viewBox="0 0 7 7"><rect x="0.5" y="0.5" width="5.8" height="5.8" rx="0.9" fill="#4a4a4c" stroke="#777" stroke-width="0.7"/></svg>
<div class="t " style="top:324.60px;font-size:6.85px;line-height:7px;color:#e9c48a;left:324.80px;">监听器[1 - 1]</div>
<svg style="left:364px;top:321px;width:46px;height:15px" viewBox="364 321 46 15"><rect x="364.00" y="321.00" width="46.00" height="14.20" fill="#8b0a8b"/></svg>
<svg style="left:368.2px;top:324.6px;width:7px;height:7px" viewBox="0 0 7 7"><rect x="0.5" y="0.5" width="5.8" height="5.8" rx="0.9" fill="#4a4a4c" stroke="#777" stroke-width="0.7"/></svg>
<div class="t " style="top:324.60px;font-size:6.85px;line-height:7px;color:#f0a0f0;left:378.20px;">GPU 内存</div>
<svg style="left:115px;top:335px;width:965px;height:88px" viewBox="115 335 965 88"><rect x="142.00" y="335.20" width="0.60" height="86.20" fill="rgba(255,255,255,0.065)"/><rect x="198.31" y="335.20" width="0.60" height="86.20" fill="rgba(255,255,255,0.065)"/><rect x="254.62" y="335.20" width="0.60" height="86.20" fill="rgba(255,255,255,0.065)"/><rect x="310.93" y="335.20" width="0.60" height="86.20" fill="rgba(255,255,255,0.065)"/><rect x="367.24" y="335.20" width="0.60" height="86.20" fill="rgba(255,255,255,0.065)"/><rect x="423.55" y="335.20" width="0.60" height="86.20" fill="rgba(255,255,255,0.065)"/><rect x="479.86" y="335.20" width="0.60" height="86.20" fill="rgba(255,255,255,0.065)"/><rect x="536.17" y="335.20" width="0.60" height="86.20" fill="rgba(255,255,255,0.065)"/><rect x="592.48" y="335.20" width="0.60" height="86.20" fill="rgba(255,255,255,0.065)"/><rect x="648.79" y="335.20" width="0.60" height="86.20" fill="rgba(255,255,255,0.065)"/><rect x="705.10" y="335.20" width="0.60" height="86.20" fill="rgba(255,255,255,0.065)"/><rect x="761.41" y="335.20" width="0.60" height="86.20" fill="rgba(255,255,255,0.065)"/><rect x="817.72" y="335.20" width="0.60" height="86.20" fill="rgba(255,255,255,0.065)"/><rect x="874.03" y="335.20" width="0.60" height="86.20" fill="rgba(255,255,255,0.065)"/><rect x="930.34" y="335.20" width="0.60" height="86.20" fill="rgba(255,255,255,0.065)"/><rect x="986.65" y="335.20" width="0.60" height="86.20" fill="rgba(255,255,255,0.065)"/><rect x="1042.96" y="335.20" width="0.60" height="86.20" fill="rgba(255,255,255,0.065)"/><rect x="115.40" y="421.40" width="964.60" height="0.70" fill="#48494d"/></svg>
<svg style="left:0;top:0;width:1080px;height:545px" viewBox="0 0 1080 545"><polyline points="115.4,418.4 159.4,418.4 168.0,412.0 168.0,407.4 182.0,407.4 182.0,405.4 188.6,405.4 188.6,396.4 197.6,396.4 197.6,384.4 210.4,384.4 210.4,365.6 221.4,365.6 221.4,338.0 714.6,338.0 714.6,390.2 1080.0,390.2" fill="none" stroke="#2049b0" stroke-width="0.8"/><circle cx="561.9" cy="338" r="1.3" fill="#1f5ae6"/></svg>
<svg style="left:115px;top:422px;width:965px;height:11px" viewBox="115 422 965 11"><rect x="115.40" y="422.10" width="964.60" height="10.60" fill="#292a2d"/></svg>
<div style="left:115.4px;top:425px;width:300px;height:7px;overflow:hidden"><div class="t" style="left:4.6px;top:-1.3px;font-size:6.75px;line-height:8px;color:#1b49c6">JS 堆: 1 302 165 944</div></div>
<svg style="left:100px;top:380px;width:700px;height:50px" viewBox="100 380 700 50"><rect x="108.4" y="414.450" width="64.2" height="9.900" rx="2.300" fill="none" stroke="#f80a12" stroke-width="1.750"/><rect x="706.500" y="383.400" width="69.600" height="12" rx="2.300" fill="none" stroke="#f80a12" stroke-width="1.750"/></svg>
<svg style="left:115px;top:432px;width:965px;height:16px" viewBox="115 432 965 16"><rect x="115.40" y="432.40" width="964.60" height="14.60" fill="#292a2d"/><rect x="115.40" y="432.40" width="964.60" height="0.60" fill="#3a3b3f"/><rect x="115.40" y="447.00" width="964.60" height="0.70" fill="#3d3e42"/><rect x="115.40" y="433.00" width="24.60" height="14.00" fill="#000"/></svg>
<div class="t " style="top:436.77px;font-size:6.5px;line-height:7px;color:#fff;left:121.00px;">摘要</div>
<div class="t " style="top:436.77px;font-size:6.5px;line-height:7px;color:#9aa0a6;left:145.80px;">自下而上</div>
<div class="t " style="top:436.77px;font-size:6.5px;line-height:7px;color:#9aa0a6;left:184.00px;">调用树</div>
<div class="t " style="top:436.77px;font-size:6.5px;line-height:7px;color:#9aa0a6;left:215.60px;">事件日志</div>
<div class="t " style="top:454.05px;font-size:7.27px;line-height:9px;color:#bdc1c6;left:120.30px;">范围：6.76 秒 - 23.88 秒</div>
<div class="t " style="top:474.77px;font-size:6.5px;line-height:7px;color:#bdc1c6;right:841.60px;">4444 毫秒</div>
<svg style="left:244px;top:474px;width:8px;height:9px" viewBox="244 474 8 9"><rect x="244.30" y="474.70" width="7.50" height="7.40" fill="#f3d583"/></svg>
<div class="t " style="top:474.81px;font-size:6.6px;line-height:7px;color:#bdc1c6;left:256.90px;">正在执行脚本</div>
<div class="t " style="top:488.77px;font-size:6.5px;line-height:7px;color:#bdc1c6;right:841.60px;">1 毫秒</div>
<svg style="left:244px;top:488px;width:8px;height:9px" viewBox="244 488 8 9"><rect x="244.30" y="488.70" width="7.50" height="7.40" fill="#b49cf0"/></svg>
<div class="t " style="top:488.81px;font-size:6.6px;line-height:7px;color:#bdc1c6;left:256.90px;">渲染</div>
<div class="t " style="top:502.67px;font-size:6.5px;line-height:7px;color:#bdc1c6;right:841.60px;">1 毫秒</div>
<svg style="left:244px;top:502px;width:8px;height:8px" viewBox="244 502 8 8"><rect x="244.30" y="502.60" width="7.50" height="7.40" fill="#8fca86"/></svg>
<div class="t " style="top:502.71px;font-size:6.6px;line-height:7px;color:#bdc1c6;left:256.90px;">绘制</div>
<div class="t " style="top:516.57px;font-size:6.5px;line-height:7px;color:#bdc1c6;right:841.60px;">13 毫秒</div>
<svg style="left:244px;top:516px;width:8px;height:8px" viewBox="244 516 8 8"><rect x="244.30" y="516.50" width="7.50" height="7.40" fill="#dedede"/></svg>
<div class="t " style="top:516.61px;font-size:6.6px;line-height:7px;color:#bdc1c6;left:256.90px;">系统</div>
<svg style="left:0;top:447.7px;width:300px;height:82.5px" viewBox="0 447.7 300 82.5"><circle cx="151.7" cy="513.45" r="30.8" fill="#fafafa"/><path d="M151.7 513.45L151.7 482.65000000000003A30.8 30.8 0 0 1 182.44 515.29Z" fill="#f3d583"/><circle cx="151.7" cy="513.45" r="18.5" fill="#202124"/></svg>
<div class="t " style="top:509.96px;font-size:6.75px;line-height:7px;color:#e8eaed;left:1.80px;width:300px;text-align:center;-webkit-text-stroke:0.12px #e8eaed;">17123 毫秒</div>
<svg style="left:115px;top:530px;width:965px;height:15px" viewBox="115 530 965 15"><rect x="115.40" y="530.20" width="964.60" height="14.80" fill="#292a2d"/><rect x="115.40" y="530.20" width="964.60" height="0.70" fill="#3d3e42"/></svg>
<div class="t " style="top:534.75px;font-size:6.7px;line-height:7px;color:#9aa0a6;left:119.60px;">总阻塞时间：4219.93 毫秒 (估算值) <span style="text-decoration:underline">了解详情</span></div>
<svg style="left:870px;top:465px;width:70px;height:60px" viewBox="870 465 70 60"><g fill="#e6e7e6"><ellipse cx="897.6" cy="488.6" rx="15" ry="12.3"/><path d="M888 497.500L886.600 505L894.500 500.300Z"/><ellipse cx="911.800" cy="499.900" rx="14.300" ry="12.200" fill="#202124"/><ellipse cx="911.800" cy="499.900" rx="13.100" ry="11"/><path d="M916.500 509.500L922.600 513.300L921.200 506.500Z"/></g><g fill="#202124"><circle cx="892" cy="485.800" r="1.900"/><circle cx="903.400" cy="485.800" r="1.900"/><circle cx="907.300" cy="496.100" r="1.600"/><circle cx="916.600" cy="496.100" r="1.600"/></g></svg>
<div class="t" style="left:928.6px;top:474.8px;font-size:26.6px;line-height:39px;color:#f4f4f4;font-family:'Noto Sans CJK SC','Liberation Sans',sans-serif">ELab团队</div>
</div></body></html>
